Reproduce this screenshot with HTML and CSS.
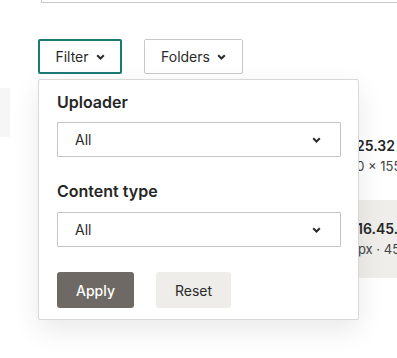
FILE: index.html
```html
<!DOCTYPE html>
<html lang="en">
<head>
    <meta charset="UTF-8">
    <meta name="viewport" content="width=device-width, initial-scale=1.0">
    <title>Files</title>
    <link rel="stylesheet" href="styles.css">
</head>
<body>
    <div class="search"><input type="text" placeholder="Search files"></div>

    <div class="toolbar">
        <button class="tool-btn active">Filter
            <svg width="9" height="6" viewBox="0 0 9 6"><path d="M1.2 1.2l3.3 3.3 3.3-3.3" fill="none" stroke="#2b2b2b" stroke-width="2"/></svg>
        </button>
        <button class="tool-btn">Folders
            <svg width="9" height="6" viewBox="0 0 9 6"><path d="M1.2 1.2l3.3 3.3 3.3-3.3" fill="none" stroke="#2b2b2b" stroke-width="2"/></svg>
        </button>

        <form class="filter-panel">
            <label for="uploader">Uploader</label>
            <div class="select-wrap">
                <select id="uploader">
                    <option>All</option>
                </select>
                <svg width="9" height="6" viewBox="0 0 9 6"><path d="M1.2 1.2l3.3 3.3 3.3-3.3" fill="none" stroke="#2b2b2b" stroke-width="2"/></svg>
            </div>

            <label for="type">Content type</label>
            <div class="select-wrap">
                <select id="type">
                    <option>All</option>
                </select>
                <svg width="9" height="6" viewBox="0 0 9 6"><path d="M1.2 1.2l3.3 3.3 3.3-3.3" fill="none" stroke="#2b2b2b" stroke-width="2"/></svg>
            </div>

            <div class="actions">
                <button type="submit" class="apply">Apply</button>
                <button type="reset" class="reset">Reset</button>
            </div>
        </form>
    </div>

    <div class="files">
        <div class="side-thumb"></div>
        <div class="file-list">
            <div class="file">
                <div class="name"><span>Screenshot 2024-02-08 at 09.25.32</span></div>
                <div class="meta"><span class="cut-1">1200 × 1550 px</span></div>
            </div>
            <div class="file selected">
                <div class="name"><span class="cut-2">Screenshot 2024-02-08 at 16.45.09</span></div>
                <div class="meta"><span class="cut-3">800 × 600 px · 456 KB</span></div>
            </div>
        </div>
    </div>
</body>
</html>
```

FILE: styles.css
```css
html, body {
    min-height: 100vh;
}
body {
    font-family: Inter, "Noto Sans", sans-serif;
    color: #2b2b2b;
    margin: 0;
    padding: 0;
    background-color: #fff;
}
.search {
    padding-left: 41px;
    margin-top: -37px;
}
.search input {
    display: block;
    width: 100%;
    height: 40px;
    box-sizing: border-box;
    border: 1px solid #c8c8c8;
    border-right: none;
    font-family: inherit;
    font-size: 14px;
    color: transparent;
}
.search input::placeholder {
    color: transparent;
}
.toolbar {
    position: relative;
    display: flex;
    gap: 22px;
    margin-top: 36px;
    padding-left: 38px;
    z-index: 2;
}
.tool-btn {
    display: flex;
    align-items: center;
    justify-content: center;
    gap: 7px;
    width: 99px;
    height: 35px;
    padding: 0;
    background-color: #fff;
    border: 1px solid #c8c8c8;
    border-radius: 2px;
    font-family: inherit;
    font-size: 14px;
    color: #2b2b2b;
    cursor: pointer;
}
.tool-btn.active {
    width: 84px;
    border: 2px solid #1d7a72;
}
.filter-panel {
    position: absolute;
    top: 40px;
    left: 38px;
    width: 321px;
    height: 241px;
    box-sizing: border-box;
    padding: 12px 18px 0;
    background-color: #fff;
    border: 1px solid #d8d8d8;
    border-radius: 2px;
    box-shadow: 0 10px 28px rgba(0, 0, 0, 0.09);
}
.filter-panel label {
    display: block;
    font-size: 16px;
    line-height: 20px;
    font-weight: 600;
    color: #262626;
    margin-bottom: 10px;
}
.select-wrap {
    position: relative;
    width: 284px;
    margin-bottom: 24px;
}
.select-wrap:nth-of-type(2) {
    margin-bottom: 25px;
}
.select-wrap select {
    display: block;
    width: 100%;
    height: 35px;
    padding: 0 17px;
    border: 1px solid #c4c4c4;
    border-radius: 1px;
    background-color: #fff;
    font-family: inherit;
    font-size: 14px;
    color: #2b2b2b;
    appearance: none;
    -webkit-appearance: none;
}
.select-wrap svg {
    position: absolute;
    right: 20px;
    top: 15px;
    pointer-events: none;
}
.filter-panel label[for="type"] {
    margin-bottom: 11px;
}
.actions {
    display: flex;
    gap: 22px;
}
.actions button {
    height: 36px;
    border: none;
    border-radius: 3px;
    font-family: inherit;
    font-size: 14px;
    cursor: pointer;
}
.apply {
    width: 77px;
    background-color: #6e6964;
    color: #fff;
    font-weight: 500;
}
.reset {
    width: 75px;
    background-color: #eeede9;
    color: #2b2b2b;
    border-radius: 1px;
}
.files {
    display: flex;
    justify-content: space-between;
    margin-top: 14px;
    overflow: hidden;
}
.side-thumb {
    width: 10px;
    height: 49px;
    background-color: #f6f6f6;
}
.file-list {
    width: 200px;
    white-space: nowrap;
}
.file {
    display: flex;
    flex-direction: column;
    align-items: flex-end;
    padding: 49px 2px 0 0;
    height: 63px;
}
.file.selected {
    background-color: #efeeeb;
    padding-top: 20px;
    height: 58px;
}
.name {
    font-size: 14px;
    line-height: 18px;
    font-weight: 600;
    color: #262626;
}
.meta {
    margin-top: 3px;
    font-size: 13px;
    line-height: 16px;
    color: #444;
}
.cut-1 {
    margin-right: -33px;
}
.cut-2 {
    margin-right: -21px;
}
.cut-3 {
    margin-right: -34px;
}
```
